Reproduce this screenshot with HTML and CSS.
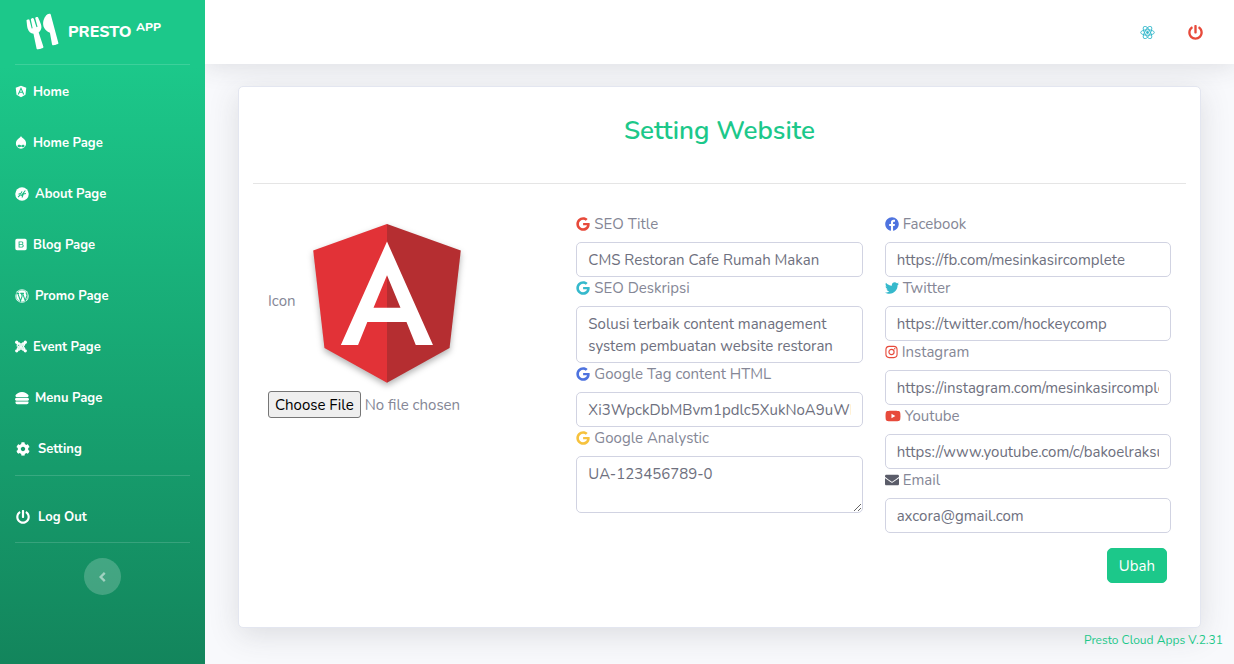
FILE: index.html
```html
<!DOCTYPE html>
<html lang="id">
<head>
<meta charset="utf-8">
<title>Setting Website</title>
<meta name="viewport" content="width=device-width, initial-scale=1">
<link rel="stylesheet" href="styles.css">
</head>
<body>
<svg class="sprite" aria-hidden="true">
  <symbol id="google" viewBox="0 0 488 512"><path d="M488 261.8C488 403.3 391.1 504 248 504 110.8 504 0 393.2 0 256S110.8 8 248 8c66.8 0 123 24.5 166.3 64.9l-67.5 64.9C258.5 52.6 94.3 116.6 94.3 256c0 86.5 69.1 156.6 153.7 156.6 98.2 0 135-70.4 140.8-106.9H248v-85.3h236.1c2.3 12.7 3.9 24.9 3.9 41.4z"/></symbol>
  <symbol id="power" viewBox="0 0 512 512"><path d="M400 54.1c63 45 104 118.6 104 201.9 0 136.8-110.8 247.7-247.5 248C120 504.3 8.2 393 8 256.4 7.9 173.1 48.9 99.3 111.8 54.2c11.7-8.3 28-4.8 35 7.7L162.6 90c5.9 10.5 3.1 23.8-6.6 31-41.5 30.8-68 79.6-68 134.9-.1 92.3 74.5 168.1 168 168.1 91.6 0 168.6-74.2 168-169.1-.3-51.8-24.7-101.8-68.1-134-9.7-7.2-12.4-20.5-6.5-30.9l15.8-28.1c7-12.4 23.2-16.1 34.8-7.8zM296 264V24c0-13.3-10.7-24-24-24h-32c-13.3 0-24 10.7-24 24v240c0 13.3 10.7 24 24 24h32c13.3 0 24-10.7 24-24z"/></symbol>
</svg>
<div class="layout">
  <aside class="sidebar">
    <a class="brand" href="#">
      <svg class="brand-icon" viewBox="0 0 416 512" aria-hidden="true"><path d="M207.9 15.2c.8 4.7 16.1 94.5 16.1 128.8 0 52.3-27.8 89.6-68.9 104.6L168 486.7c.7 13.7-10.2 25.3-24 25.3H80c-13.7 0-24.7-11.5-24-25.3l12.9-238.1C27.7 233.6 0 196.2 0 144 0 109.6 15.3 19.9 16.1 15.2 19.3-5.1 61.4-5.4 64 16.3v141.2c1.3 3.4 15.1 3.2 16 0 1.4-25.3 7.9-139.2 8-141.8 3.3-20.8 44.7-20.8 47.9 0 .2 2.7 6.6 116.5 8 141.8.9 3.2 14.8 3.4 16 0V16.3c2.6-21.6 44.8-21.4 48-1.1zm119.2 285.7l-15 185.1c-1.2 14 9.9 26 23.9 26h56c13.3 0 24-10.7 24-24V24c0-13.2-10.7-24-24-24-82.5 0-221.4 178.5-64.9 300.9z"/></svg>
      <span class="brand-text">PRESTO <sup>APP</sup></span>
    </a>
    <hr class="divider">
    <nav class="nav">
      <a class="nav-link" href="#"><svg class="icon-sm" viewBox="0 0 448 512" aria-hidden="true"><path d="M185.7 268.1h76.2l-38.1-91.6-38.1 91.6zM223.8 32L16 106.4l31.8 275.7 176 97.900 176-97.900 31.800-275.700zM354 373.800h-48.600l-26.200-65.400H168.600l-26.200 65.400H93.700L223.800 81.500z"/></svg>Home</a>
      <a class="nav-link" href="#"><svg class="icon-sm" viewBox="0 0 448 512" aria-hidden="true"><path fill-rule="evenodd" d="M224 0c18 48 60 72 104 104 60 44 96 104 96 184 0 124-90 212-200 212S24 412 24 288c0-80 36-140 96-184C164 72 206 48 224 0zM150 345c-42 0-62 25-62 52 0 28 24 47 54 47 42 0 68-35 94-35 24 0 42 33 76 33 32 0 50-22 50-48 0-31-24-52-53-52-34 0-53 31-77 31-26 0-45-28-82-28z"/></svg>Home Page</a>
      <a class="nav-link" href="#"><svg class="icon-md" viewBox="0 0 16 16" aria-hidden="true"><circle cx="8" cy="8" r="7.7"/><path class="cut" d="M3.5 11.5 6 9l1.500.5L11.800 4M8 12l1.500-4 3-.7M4 8.200l3-1.200 1-2"/></svg>About Page</a>
      <a class="nav-link" href="#"><svg class="icon-sm" viewBox="0 0 448 512" aria-hidden="true"><path fill-rule="evenodd" d="M64 32h320a64 64 0 0 1 64 64v320a64 64 0 0 1-64 64H64a64 64 0 0 1-64-64V96a64 64 0 0 1 64-64zm66 104v240h112c56 0 88-25 88-69 0-32-19-53-49-58 22-7 37-26 37-51 0-38-29-62-76-62zm36 29h68c30 0 46 13 46 37 0 25-18 38-52 38h-62zm0 103h68c38 0 57 13 57 39s-19 40-55 40h-70z"/></svg>Blog Page</a>
      <a class="nav-link" href="#"><svg class="icon-md" viewBox="0 0 16 16" aria-hidden="true"><circle cx="8" cy="8" r="7.7"/><circle class="cut thin" cx="8" cy="8" r="6.800"/><path class="cut" d="M1.800 5h3M3.200 5 6.300 13.500 8.200 8 7.200 5H6M7.200 5h3M8.700 5l3 8.300L13.500 8c.6-2-.9-2.300-.8-4"/></svg>Promo Page</a>
      <a class="nav-link" href="#"><svg class="icon-sm" viewBox="0 0 16 16" aria-hidden="true"><path class="joomla" d="M2.500 2.500 11 11M13.500 2.500 5 11M13.500 13.500 5 5M2.500 13.500 11 5M3 7.500V5.500Q3 3 5.500 3L8 5.200 10.500 3Q13 3 13 5.500L10.800 8 13 10.500Q13 13 10.500 13L8 10.800 5.500 13Q3 13 3 10.500L5.200 8z"/><circle cx="2.300" cy="2.300" r="2.200"/><circle cx="13.700" cy="2.300" r="2.200"/><circle cx="2.300" cy="13.700" r="2.200"/><circle cx="13.700" cy="13.700" r="2.200"/></svg>Event Page</a>
      <a class="nav-link" href="#"><svg class="icon-md" viewBox="0 0 512 512" aria-hidden="true"><path d="M464 256H48a48 48 0 0 0 0 96h416a48 48 0 0 0 0-96zm16 128H32a16 16 0 0 0-16 16v16a64 64 0 0 0 64 64h352a64 64 0 0 0 64-64v-16a16 16 0 0 0-16-16zM58.640 224h394.720c34.570 0 54.620-43.900 34.820-75.880C448 83.200 359.550 32.100 256 32c-103.540.1-192 51.200-232.180 116.110C4 180.090 24.070 224 58.640 224z"/></svg>Menu Page</a>
      <a class="nav-link wide" href="#"><svg class="icon-md" viewBox="0 0 512 512" aria-hidden="true"><path d="M487.4 315.7l-42.6-24.6c4.3-23.2 4.3-47 0-70.2l42.6-24.6c4.9-2.8 7.1-8.6 5.5-14-11.1-35.6-30-67.8-54.7-94.6-3.8-4.1-10-5.1-14.8-2.3L380.8 110c-17.9-15.4-38.5-27.3-60.8-35.1V25.8c0-5.6-3.9-10.5-9.4-11.7-36.7-8.2-74.3-7.8-109.2 0-5.5 1.2-9.4 6.1-9.4 11.7V75c-22.2 7.9-42.8 19.8-60.8 35.1L88.700 85.500c-4.900-2.800-11-1.900-14.800 2.300-24.700 26.700-43.600 58.900-54.700 94.600-1.700 5.400.6 11.200 5.500 14L67.300 221c-4.300 23.200-4.300 47 0 70.200l-42.600 24.600c-4.900 2.800-7.100 8.600-5.500 14 11.100 35.600 30 67.800 54.700 94.600 3.800 4.100 10 5.100 14.800 2.300l42.600-24.600c17.900 15.400 38.500 27.300 60.800 35.100v49.200c0 5.600 3.900 10.500 9.400 11.700 36.700 8.200 74.300 7.800 109.200 0 5.500-1.200 9.400-6.100 9.400-11.700v-49.200c22.200-7.900 42.800-19.800 60.800-35.100l42.600 24.600c4.900 2.800 11 1.900 14.800-2.300 24.700-26.700 43.600-58.900 54.700-94.600 1.500-5.500-.7-11.300-5.600-14.100zM256 336c-44.100 0-80-35.900-80-80s35.900-80 80-80 80 35.900 80 80-35.900 80-80 80z"/></svg>Setting</a>
    </nav>
    <hr class="divider spaced">
    <a class="nav-link wide" href="#"><svg class="icon-md" aria-hidden="true"><use href="#power"/></svg>Log Out</a>
    <hr class="divider spaced">
    <button class="toggle" type="button" aria-label="Toggle sidebar"><svg viewBox="0 0 12 12" aria-hidden="true"><path d="M7.500 2.500 4 6l3.500 3.500"/></svg></button>
  </aside>

  <div class="content">
    <header class="topbar">
      <a class="top-link info" href="#" aria-label="Website"><svg viewBox="0 0 32 32" aria-hidden="true"><g class="react"><ellipse cx="16" cy="16" rx="14.500" ry="5.800"/><ellipse cx="16" cy="16" rx="14.500" ry="5.800" transform="rotate(60 16 16)"/><ellipse cx="16" cy="16" rx="14.500" ry="5.800" transform="rotate(120 16 16)"/></g><circle cx="16" cy="16" r="3"/></svg></a>
      <a class="top-link danger" href="#" aria-label="Log out"><svg aria-hidden="true"><use href="#power"/></svg></a>
    </header>

    <main class="main">
      <form class="card">
        <h1 class="title">Setting Website</h1>
        <hr class="rule">
        <div class="columns">
          <div class="column">
            <div class="logo-row">
              <label for="icon">Icon</label>
              <svg class="logo" viewBox="14 16 222 222" role="img" aria-label="Angular">
                <path fill="#e23237" d="M125 30 31.900 63.200l14.200 123.100L125 230z"/>
                <path fill="#b52e31" d="M125 30v200l78.900-43.700 14.200-123.100z"/>
                <path fill="#fff" fill-rule="evenodd" d="M125 52.100 66.800 182.600h21.700l11.700-29.200h49.400l11.700 29.200H183zM142 135.400h-34l17-40.900z"/>
              </svg>
            </div>
            <input class="file" id="icon" type="file">
          </div>
          <div class="column">
            <label for="title"><svg class="danger" aria-hidden="true"><use href="#google"/></svg>SEO Title</label>
            <input class="field" id="title" type="text" value="CMS Restoran Cafe Rumah Makan">
            <label for="desc"><svg class="info" aria-hidden="true"><use href="#google"/></svg>SEO Deskripsi</label>
            <textarea class="field area fixed" id="desc" rows="2">Solusi terbaik content management system pembuatan website restoran</textarea>
            <label for="tag"><svg class="primary" aria-hidden="true"><use href="#google"/></svg>Google Tag content HTML</label>
            <input class="field" id="tag" type="text" value="Xi3WpckDbMBvm1pdlc5XukNoA9uWDbMBvm1">
            <label for="analytic"><svg class="warning" aria-hidden="true"><use href="#google"/></svg>Google Analystic</label>
            <textarea class="field area" id="analytic" rows="2">UA-123456789-0</textarea>
          </div>
          <div class="column">
            <label for="facebook"><svg class="primary" viewBox="0 0 512 512" aria-hidden="true"><path d="M504 256C504 119 393 8 256 8S8 119 8 256c0 123.780 90.690 226.380 209.250 245V327.690h-63V256h63v-54.640c0-62.150 37-96.480 93.670-96.480 27.140 0 55.520 4.840 55.520 4.840v61h-31.280c-30.800 0-40.410 19.120-40.410 38.730V256h68.780l-11 71.690h-57.780V501C413.310 482.380 504 379.780 504 256z"/></svg>Facebook</label>
            <input class="field" id="facebook" type="text" value="https://fb.com/mesinkasircomplete">
            <label for="twitter"><svg class="info" viewBox="0 0 512 512" aria-hidden="true"><path d="M459.37 151.716c.325 4.548.325 9.097.325 13.645 0 138.72-105.583 298.558-298.558 298.558-59.452 0-114.68-17.219-161.137-47.106 8.447.974 16.568 1.299 25.34 1.299 49.055 0 94.213-16.568 130.274-44.832-46.132-.975-84.792-31.188-98.112-72.772 6.498.974 12.995 1.624 19.818 1.624 9.421 0 18.843-1.3 27.614-3.573-48.081-9.747-84.143-51.98-84.143-102.985v-1.299c13.969 7.797 30.214 12.67 47.431 13.319-28.264-18.843-46.781-51.005-46.781-87.391 0-19.492 5.197-37.36 14.294-52.954 51.655 63.675 129.3 105.258 216.365 109.807-1.624-7.797-2.599-15.918-2.599-24.04 0-57.828 46.782-104.934 104.934-104.934 30.213 0 57.502 12.67 76.67 33.137 23.715-4.548 46.456-13.32 66.599-25.34-7.798 24.366-24.366 44.833-46.132 57.827 21.117-2.273 41.584-8.122 60.426-16.243-14.292 20.791-32.161 39.308-52.628 54.253z"/></svg>Twitter</label>
            <input class="field" id="twitter" type="text" value="https://twitter.com/hockeycomp">
            <label for="instagram"><svg class="danger slim" viewBox="0 0 14 14" aria-hidden="true"><g class="camera"><rect x="1" y="1" width="12" height="12" rx="3.500"/><circle cx="7" cy="7" r="2.800"/></g><circle cx="10.500" cy="3.600" r=".8"/></svg>Instagram</label>
            <input class="field" id="instagram" type="text" value="https://instagram.com/mesinkasircomplete">
            <label for="youtube"><svg class="danger broad" viewBox="0 0 576 512" aria-hidden="true"><path d="M549.655 124.083c-6.281-23.650-24.787-42.276-48.284-48.597C458.781 64 288 64 288 64S117.220 64 74.629 75.486c-23.497 6.322-42.003 24.947-48.284 48.597-11.412 42.867-11.412 132.305-11.412 132.305s0 89.438 11.412 132.305c6.281 23.650 24.787 41.500 48.284 47.821C117.220 448 288 448 288 448s170.780 0 213.371-11.486c23.497-6.321 42.003-24.171 48.284-47.821 11.412-42.867 11.412-132.305 11.412-132.305s0-89.438-11.412-132.305zm-317.510 213.508V175.185l142.739 81.205-142.739 81.201z"/></svg>Youtube</label>
            <input class="field" id="youtube" type="text" value="https://www.youtube.com/c/bakoelraksu">
            <label for="email"><svg class="dark" viewBox="0 0 512 512" aria-hidden="true"><path d="M502.3 190.8c3.900-3.100 9.700-.2 9.700 4.700V400c0 26.500-21.500 48-48 48H48c-26.500 0-48-21.500-48-48V195.600c0-5 5.700-7.800 9.700-4.700 22.400 17.400 52.100 39.500 154.100 113.600 21.100 15.400 56.700 47.800 92.200 47.600 35.700.3 72-32.800 92.300-47.600 102-74.100 131.600-96.300 154-113.700zM256 320c23.200.4 56.600-29.200 73.400-41.400 132.700-96.300 142.800-104.700 173.400-128.700 5.800-4.500 9.200-11.500 9.200-18.900v-19c0-26.500-21.500-48-48-48H48c-26.500 0-48 21.500-48 48v19c0 7.400 3.400 14.300 9.200 18.900 30.600 23.900 40.700 32.400 173.400 128.700 16.800 12.200 50.200 41.800 73.400 41.400z"/></svg>Email</label>
            <input class="field" id="email" type="email" value="axcora@gmail.com">
            <button class="submit" type="submit">Ubah</button>
          </div>
        </div>
      </form>
    </main>
    <footer class="footer"><a href="#">Presto Cloud Apps V.2.31</a></footer>
  </div>
</div>
</body>
</html>
```

FILE: styles.css
```css
* { box-sizing: border-box; }

body {
  margin: 0;
  font-family: Nunito, Lato, "Open Sans", sans-serif;
  font-size: 15px;
  line-height: 22px;
  color: #858796;
  background: #f8f9fc;
}

a { color: inherit; text-decoration: none; }
svg { fill: currentColor; }
.sprite { display: none; }

.layout { display: flex; min-height: 100vh; }

.sidebar {
  position: relative;
  z-index: 1;
  display: flex;
  flex-direction: column;
  flex: 0 0 205px;
  color: #fff;
  background: linear-gradient(180deg, #1cc88a 10%, #13855c 100%);
}

.brand {
  display: flex;
  align-items: center;
  gap: 12px;
  height: 64px;
  padding-left: 28px;
  font-weight: 800;
}
.brand-icon { width: 28px; height: 32px; transform: rotate(-15deg); }
.brand-text { font-size: 16px; }
.brand-text sup { font-size: 12px; line-height: 0; }

.divider {
  width: auto;
  margin: 0 15px;
  border: 0;
  border-top: 1px solid rgba(255, 255, 255, .15);
}
.divider.spaced { margin-bottom: 15px; }

.nav { padding: 1px 0; }
.nav-link {
  display: flex;
  align-items: center;
  gap: 6px;
  height: 51px;
  padding: 0 15px;
  font-size: 13px;
  font-weight: 700;
}
.nav-link.wide { gap: 8px; padding-left: 16px; }
.icon-sm { width: 12px; height: 13px; }
.icon-md { width: 14px; height: 14px; }
.cut { fill: none; stroke: #1cb982; stroke-width: 1.2; }
.cut.thin { stroke-width: .6; }
.joomla { fill: none; stroke: currentColor; stroke-width: 1.6; }

.toggle {
  display: flex;
  align-items: center;
  justify-content: center;
  align-self: center;
  width: 37px;
  height: 37px;
  padding: 0;
  border: 0;
  border-radius: 50%;
  color: rgba(255, 255, 255, .5);
  background: rgba(255, 255, 255, .2);
}
.toggle svg { width: 14px; height: 14px; fill: none; stroke: currentColor; stroke-width: 2; }

.content { display: flex; flex: 1; flex-direction: column; min-width: 0; }

.topbar {
  display: flex;
  align-items: center;
  justify-content: flex-end;
  gap: 33px;
  height: 64px;
  padding-right: 31px;
  background: #fff;
  box-shadow: 0 2px 26px rgba(58, 59, 69, .15);
}
.top-link { display: flex; }
.top-link svg { width: 15px; height: 15px; }
.react { fill: none; stroke: currentColor; stroke-width: 2; }

.main { padding: 22px 33px 0; }

.card {
  padding: 32px 14px 44px;
  border: 1px solid #e3e6f0;
  border-radius: 5px;
  background: #fff;
  box-shadow: 0 7px 30px rgba(58, 59, 69, .15);
}

.title {
  margin: 0;
  font-size: 26px;
  line-height: 24px;
  font-weight: 600;
  text-align: center;
  color: #1cc88a;
}

.rule {
  margin: 40px 0 29px;
  border: 0;
  border-top: 1px solid rgba(0, 0, 0, .1);
}

.columns {
  display: grid;
  grid-template-columns: repeat(3, minmax(0, 1fr));
  gap: 22px;
  padding: 0 15px;
}
.column { display: flex; flex-direction: column; }

.column > label {
  display: flex;
  align-items: center;
  gap: 4px;
  height: 22px;
  margin-bottom: 7px;
}
.column > label svg { width: 14px; height: 14px; }
.column > label .slim { width: 13px; }
.column > label .broad { width: 16px; }
.camera { fill: none; stroke: currentColor; stroke-width: 1.2; }

.logo-row { display: flex; align-items: center; gap: 3px; }
.logo {
  width: 176px;
  height: 176px;
  filter: drop-shadow(0 3px 3px rgba(0, 0, 0, .3));
}

.file { width: 100%; margin-top: 2px; font: inherit; color: inherit; }
.file::file-selector-button {
  height: 27px;
  padding: 1px 6px;
  border: 1px solid #767676;
  border-radius: 3px;
  font: inherit;
  color: #000;
  background: #efefef;
}

.field {
  display: block;
  width: 100%;
  height: 35px;
  padding: 5px 11px;
  border: 1px solid #d1d3e2;
  border-radius: 5px;
  font: inherit;
  color: #6e707e;
  background: #fff;
}
.field.area { height: 57px; padding: 6px 11px; resize: vertical; overflow: hidden; }
.field.fixed { resize: none; }

.submit {
  align-self: flex-end;
  height: 35px;
  margin: 15px 4px 0 0;
  padding: 0 11px;
  border: 1px solid #1cc88a;
  border-radius: 5px;
  font: inherit;
  color: #fff;
  background: #1cc88a;
}

.footer {
  padding: 1px 11px 0 0;
  font-size: 12px;
  text-align: right;
  color: #1cc88a;
}

.danger { color: #e74a3b; }
.info { color: #36b9cc; }
.primary { color: #4e73df; }
.warning { color: #f6c23e; }
.dark { color: #5a5c69; }
```
